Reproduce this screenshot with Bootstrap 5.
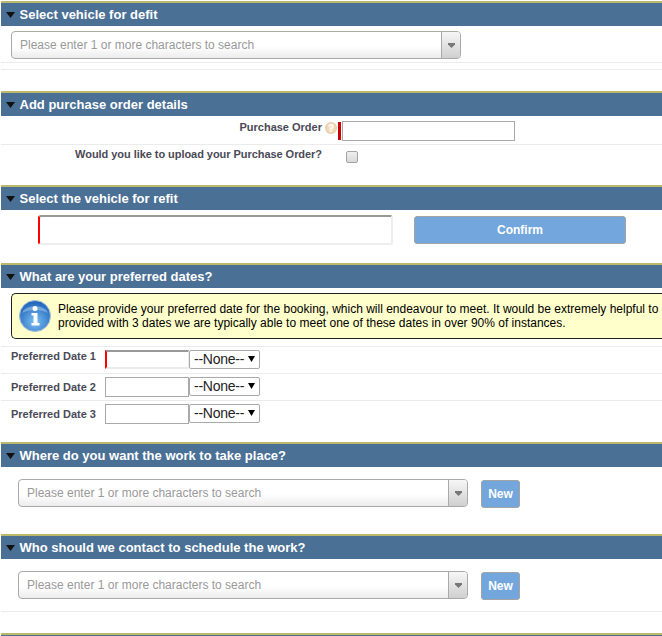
<!DOCTYPE html>
<html lang="en">
<head>
    <meta charset="UTF-8">
    <meta name="viewport" content="width=device-width, initial-scale=1.0">
    <title>Defit and refit booking</title>
    <link href="https://cdn.jsdelivr.net/npm/bootstrap@5.3.0/dist/css/bootstrap.min.css" rel="stylesheet">
    <style>
        html, body {
            height: 636px;
            overflow: hidden;
        }
        body {
            font-family: "Liberation Sans", Arial, sans-serif;
            font-size: 12px;
            line-height: 14px;
            color: #000;
            padding: 1px 0 0 1px;
            background: #fff;
        }
        .sect-bar {
            height: 25px;
            background: #4a7096;
            border-top: 2px solid #bcb86c;
            color: #fff;
            font-size: 13px;
            font-weight: 700;
            line-height: 20px;
            padding-left: 5px;
            gap: 4.5px;
        }
        .sect-bar svg { flex: none; }
        .rule { border-bottom: 1px solid #ebebeb; }
        .fld-label {
            font-size: 11px;
            font-weight: 700;
            color: #4a4a56;
            white-space: nowrap;
        }
        .combo {
            width: 450px;
            height: 28px;
            border: 1px solid #a9a9a9;
            border-radius: 4px;
            background: linear-gradient(#fff 55%, #ececec);
            color: #999;
            overflow: hidden;
        }
        .combo-text { padding-left: 8px; flex: 1; }
        .combo-btn {
            width: 19px;
            border-left: 1px solid #a9a9a9;
            background: linear-gradient(#f6f6f6, #cfcfcf);
        }
        .sf-input {
            height: 20px;
            border: 1px solid #a9a9a9;
            border-radius: 0;
            background: #fff;
            padding: 0 2px;
        }
        .req-bar {
            width: 3px;
            height: 18px;
            background: #c00;
            margin: 6px 1px 0 0;
        }
        .po-row { height: 29px; }
        .po-label { width: 321px; text-align: right; padding-top: 4px; }
        .orb { margin: 6px 1px 0 3px; flex: none; }
        .po-input { width: 173px; margin-top: 5px; }
        .upload-row { height: 39px; padding-top: 2px; }
        .upload-label { width: 321px; text-align: right; letter-spacing: -.05px; }
        .sf-check {
            width: 12px;
            height: 12px;
            margin-left: 24px;
            margin-top: 4px;
            border: 1px solid #a3a3a3;
            border-radius: 2px;
            background: linear-gradient(#f0f0f0, #d8d8d8);
            appearance: none;
        }
        .refit-input {
            width: 355px;
            height: 30px;
            border: 2px solid #eee;
            border-top-color: #999;
            border-left: 2px solid #f00;
            border-radius: 3px;
            background: #fff;
        }
        .blue-btn {
            height: 28px;
            padding: 0;
            border: 1px solid #a3a3a3;
            border-radius: 3px;
            background: #72a6dd;
            color: #fff;
            font-size: 12px;
            font-weight: 700;
            line-height: 24px;
        }
        .confirm-btn { width: 212px; margin-left: 21px; }
        .new-btn { width: 39px; margin: 1px 0 0 13px; }
        .info-msg {
            height: 46px;
            margin-left: 10px;
            border: 1px solid #222;
            border-right: 0;
            border-radius: 5px 0 0 5px;
            background: #ffc;
            padding-left: 7px;
            white-space: nowrap;
            overflow: hidden;
        }
        .info-msg svg { margin-right: 7px; flex: none; }
        .date-row { height: 27px; padding-top: 3px; }
        .date-label { width: 104px; padding: 3px 0 0 10px; }
        .date-label-first { padding-top: 0; margin-top: -1px; }
        .date-input { width: 84px; }
        .date-first {
            border-width: 2px 1px 2px 2px;
            border-color: #999 #ebebeb #ebebeb #f00;
            height: 19px;
        }
        .none-sel {
            width: 71px;
            height: 19px;
            padding: 0 0 0 4px;
            border: 1px solid #a9a9a9;
            border-radius: 2px;
            font-family: "Liberation Sans", Arial, sans-serif;
            font-size: 14px;
            line-height: 17px;
            letter-spacing: -.25px;
            color: #222;
            background-color: #fff;
            background-image: url("data:image/svg+xml,%3Csvg xmlns='http://www.w3.org/2000/svg' width='7' height='6'%3E%3Cpath d='M0 0h7L3.500 6z'/%3E%3C/svg%3E");
            background-position: right 4px top 5px;
            background-size: 7px 6px;
        }
    </style>
</head>
<body>
    <svg width="0" height="0" class="position-absolute">
        <symbol id="tri" viewBox="0 0 9 6"><path d="M0 0h9L4.500 6z" fill="#111"/></symbol>
        <symbol id="tri-grey" viewBox="0 0 7 5"><path d="M0 0h7v1.500L3.500 5 0 1.500z" fill="#777"/></symbol>
    </svg>

    <section style="height:90px">
        <div class="sect-bar d-flex align-items-center">
            <svg width="9" height="6"><use href="#tri"/></svg><span>Select vehicle for defit</span>
        </div>
        <div class="d-flex rule" style="height:37px;padding:5px 0 0 10px">
            <div class="combo d-flex">
                <div class="combo-text align-self-center">Please enter 1 or more characters to search</div>
                <div class="combo-btn d-flex align-items-center justify-content-center"><svg width="7" height="5"><use href="#tri-grey"/></svg></div>
            </div>
        </div>
        <div class="rule" style="height:7px"></div>
    </section>

    <section style="height:94px">
        <div class="sect-bar d-flex align-items-center">
            <svg width="9" height="6"><use href="#tri"/></svg><span>Add purchase order details</span>
        </div>
        <div class="po-row rule d-flex align-items-start">
            <div class="po-label fld-label">Purchase Order</div>
            <svg class="orb" width="12" height="12" viewBox="0 0 12 12">
                <defs>
                    <radialGradient id="help" cx="50%" cy="50%" r="55%">
                        <stop offset="0" stop-color="#f8ead6"/>
                        <stop offset="1" stop-color="#e8c9a0"/>
                    </radialGradient>
                </defs>
                <circle cx="6" cy="6" r="6" fill="url(#help)"/>
                <text x="6" y="9.500" font-size="10" font-weight="700" text-anchor="middle" fill="#fff">?</text>
            </svg>
            <div class="req-bar"></div>
            <input type="text" class="sf-input po-input" aria-label="Purchase Order">
        </div>
        <div class="upload-row d-flex align-items-start">
            <div class="upload-label fld-label">Would you like to upload your Purchase Order?</div>
            <input type="checkbox" class="sf-check" aria-label="Upload purchase order">
        </div>
    </section>

    <section style="height:78px">
        <div class="sect-bar d-flex align-items-center">
            <svg width="9" height="6"><use href="#tri"/></svg><span>Select the vehicle for refit</span>
        </div>
        <div class="d-flex align-items-center" style="padding:5px 0 0 37px">
            <input type="text" class="refit-input" aria-label="Vehicle for refit">
            <button type="button" class="blue-btn confirm-btn">Confirm</button>
        </div>
    </section>

    <section style="height:179px">
        <div class="sect-bar d-flex align-items-center">
            <svg width="9" height="6"><use href="#tri"/></svg><span>What are your preferred dates?</span>
        </div>
        <div class="rule" style="height:59px;padding-top:5px">
            <div class="info-msg d-flex align-items-center">
                <svg width="32" height="32" viewBox="0 0 32 32">
                    <defs>
                        <radialGradient id="orb" cx="50%" cy="68%" r="62%">
                            <stop offset="0" stop-color="#7cc0f4"/>
                            <stop offset="1" stop-color="#2468bd"/>
                        </radialGradient>
                    </defs>
                    <circle cx="16" cy="16" r="15.500" fill="url(#orb)" stroke="#a9bfd6"/>
                    <path d="M3 13C6 4 26 4 29 13C22 9 10 9 3 13z" fill="#fff" opacity=".3"/>
                    <circle cx="16" cy="8.500" r="2.500" fill="#fff"/>
                    <path d="M12.500 13h6v10h2v2.500h-8V23h2v-7.500h-2z" fill="#fff"/>
                </svg>
                <div>Please provide your preferred date for the booking, which will endeavour to meet. It would be extremely helpful to<br>provided with 3 dates we are typically able to meet one of these dates in over 90% of instances.</div>
            </div>
        </div>
        <div class="date-row rule d-flex align-items-start">
            <div class="date-label date-label-first fld-label">Preferred Date 1</div>
            <input type="text" class="sf-input date-input date-first" aria-label="Preferred Date 1">
            <select class="form-select none-sel" aria-label="Time 1"><option>--None--</option></select>
        </div>
        <div class="date-row rule d-flex align-items-start">
            <div class="date-label fld-label">Preferred Date 2</div>
            <input type="text" class="sf-input date-input" aria-label="Preferred Date 2">
            <select class="form-select none-sel" aria-label="Time 2"><option>--None--</option></select>
        </div>
        <div class="date-row d-flex align-items-start">
            <div class="date-label fld-label">Preferred Date 3</div>
            <input type="text" class="sf-input date-input" aria-label="Preferred Date 3">
            <select class="form-select none-sel" aria-label="Time 3"><option>--None--</option></select>
        </div>
    </section>

    <section style="height:92px">
        <div class="sect-bar d-flex align-items-center">
            <svg width="9" height="6"><use href="#tri"/></svg><span>Where do you want the work to take place?</span>
        </div>
        <div class="d-flex align-items-start" style="padding:12px 0 0 17px">
            <div class="combo d-flex">
                <div class="combo-text align-self-center">Please enter 1 or more characters to search</div>
                <div class="combo-btn d-flex align-items-center justify-content-center"><svg width="7" height="5"><use href="#tri-grey"/></svg></div>
            </div>
            <button type="button" class="blue-btn new-btn">New</button>
        </div>
    </section>

    <section style="height:99px">
        <div class="sect-bar d-flex align-items-center">
            <svg width="9" height="6"><use href="#tri"/></svg><span>Who should we contact to schedule the work?</span>
        </div>
        <div class="d-flex align-items-start rule" style="height:53px;padding:12px 0 0 17px">
            <div class="combo d-flex">
                <div class="combo-text align-self-center">Please enter 1 or more characters to search</div>
                <div class="combo-btn d-flex align-items-center justify-content-center"><svg width="7" height="5"><use href="#tri-grey"/></svg></div>
            </div>
            <button type="button" class="blue-btn new-btn">New</button>
        </div>
    </section>

    <section>
        <div class="sect-bar"></div>
    </section>

    <script src="https://cdn.jsdelivr.net/npm/bootstrap@5.3.0/dist/js/bootstrap.bundle.min.js"></script>
</body>
</html>
